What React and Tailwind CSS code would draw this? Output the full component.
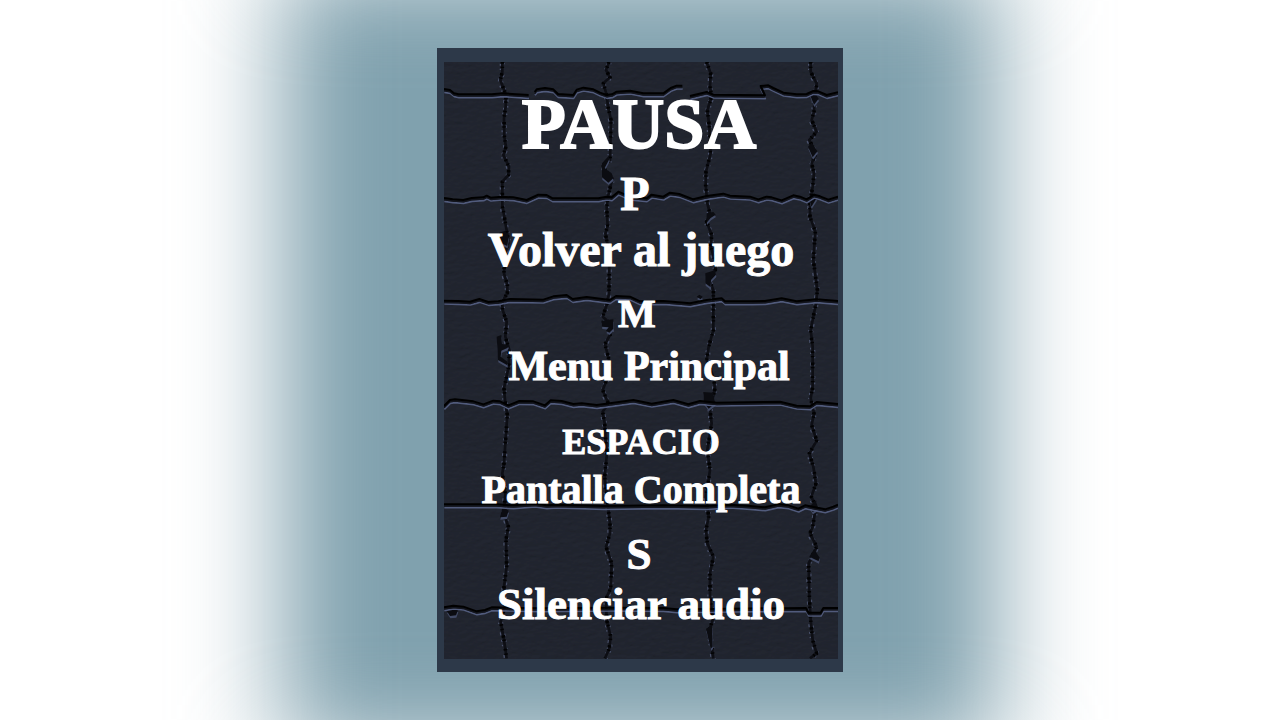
const rowCracks = [
  "M42 147L60 150 72 160 86 163 185 163 220 160 296 165 M314 156L320 148 345 144 370 148 384 162 430 165 440 149 460 143 490 148 510 158 530 165 546 163 560 155 600 152 640 160 700 160 722 144 740 137 757 137 M780 168L830 156 850 164 1005 166 997 148 992 138 1015 136 1030 144 1060 158 1100 163 1130 162 1150 153 1165 154 1190 165 1224 157",
  "M42 474L68 478 100 480 125 474 160 472 170 467 182 473 215 470 250 472 290 480 325 464 350 465 368 475 505 475 530 470 545 472 565 455 600 470 650 475 665 464 700 470 720 458 748 462 790 478 830 468 880 461 900 467 960 470 985 478 1010 470 1025 472 1055 481 1090 466 1110 470 1130 478 1152 464 1170 469 1195 479 1224 470",
  "M42 782L85 783 120 785 148 777 175 786 205 784 240 777 340 779 370 769 410 765 428 777 470 771 540 780 558 768 600 770 630 784 700 783 780 790 830 780 875 775 885 784 965 784 1005 783 1055 775 1100 784 1160 778 1224 783",
  "M42 1098L60 1080 75 1078 130 1084 160 1093 190 1082 210 1084 235 1096 268 1083 310 1084 345 1096 362 1081 395 1083 430 1092 455 1090 500 1095 540 1090 610 1080 665 1091 730 1080 775 1093 810 1083 860 1088 1050 1085 1100 1097 1140 1099 1160 1086 1224 1092",
  "M42 1393L200 1393 250 1396 315 1391 350 1396 380 1394 520 1398 700 1396 830 1398 900 1394 960 1398 1005 1402 1045 1393 1075 1396 1105 1406 1125 1396 1185 1408 1210 1400 1224 1394",
  "M42 1702L70 1697 100 1700 140 1714 165 1710 185 1702 330 1705 560 1703 700 1704 740 1708 900 1706 1128 1704 1136 1718 1172 1718 1180 1704 1224 1704",
];

const columnCracks = [
  "M217 66L217 96 211 120 228 165 227 200 222 235 223 290 228 320 220 345 237 380 235 405 217 425 217 495 228 560 235 600 224 650 222 700 232 735 232 760 216 785 218 810 230 845 226 890 238 930 236 980 222 1045 225 1080 232 1125 228 1180 222 1270 217 1300 226 1360 222 1420 235 1460 228 1500 230 1580 222 1640 224 1700 212 1745 222 1800 230 1855",
  "M537 66L528 90 540 112 520 130 530 165 534 200 543 240 540 360 520 378 530 400 547 415 535 465 530 500 533 560 526 580 538 640 537 760 530 795 518 830 547 855 540 885 525 912 537 960 530 1020 518 1050 535 1090 518 1115 524 1150 527 1200 531 1240 524 1310 533 1390 540 1450 540 1480 528 1520 545 1570 542 1645 528 1675 530 1740 542 1790 538 1825 525 1855",
  "M830 66L842 100 840 140 845 170 832 210 838 260 842 340 828 395 827 435 832 490 840 520 830 545 845 585 842 620 856 665 856 690 838 720 850 750 850 870 836 920 830 960 850 1010 855 1045 840 1110 845 1150 832 1230 840 1290 828 1370 836 1430 828 1470 832 1510 850 1550 840 1600 840 1670 848 1740 838 1770 850 1855",
  "M1142 66L1142 95 1160 130 1153 180 1152 215 1145 240 1160 275 1138 300 1158 340 1145 370 1152 400 1148 440 1140 490 1140 530 1156 575 1150 660 1162 750 1158 790 1142 870 1148 920 1148 1040 1142 1075 1152 1120 1145 1155 1160 1202 1138 1240 1150 1280 1158 1330 1144 1370 1158 1400 1148 1460 1140 1480 1160 1520 1136 1570 1138 1670 1142 1740 1148 1800 1160 1840 1140 1855",
];

const chips = [
  "M516 370L536 348 538 358 524 384 545 400 550 415 535 428 516 412Z",
  "M208 578L225 572 236 590 232 618 214 610 202 596Z",
  "M830 520L850 516 857 524 842 534 830 548Z",
  "M826 700L856 690 858 704 843 720 842 742 826 730Z",
  "M200 890L214 885 216 912 236 916 232 924 214 932 212 950 232 965 232 976 204 960Z",
  "M514 842L550 838 550 866 538 878 528 872 536 862 516 860Z",
  "M820 1056L850 1058 856 1090 836 1106 822 1088Z",
  "M210 1432L218 1400 236 1412 230 1430Z",
  "M1138 1550L1152 1528 1168 1552 1166 1564Z",
  "M828 1766L846 1756 848 1820 842 1826Z",
  "M1134 320L1145 308 1162 334 1148 352Z",
  "M1140 165L1152 154 1166 176 1152 194Z",
  "M1138 480L1152 460 1160 475 1144 500Z",
  "M50 1712L66 1702 84 1710 78 1726 60 1728Z",
  "M800 770L808 764 818 770 812 778Z",
  "M1138 1400L1158 1380 1164 1406 1148 1416Z",
];

function StoneWall() {
  return (
    <svg
      className="absolute inset-0 size-full"
      viewBox="42 66 1182 1791"
      preserveAspectRatio="none"
      fill="none"
      strokeLinejoin="round"
      aria-hidden="true"
    >
      <filter id="grain" x="0" y="0" width="100%" height="100%">
        <feTurbulence type="fractalNoise" baseFrequency="0.04 0.08" numOctaves="3" />
        <feDiffuseLighting lightingColor="#252935" surfaceScale="3">
          <feDistantLight azimuth="250" elevation="62" />
        </feDiffuseLighting>
      </filter>
      <rect x="42" y="66" width="1182" height="1791" filter="url(#grain)" opacity="0.5" />
      {columnCracks.map((d) => (
        <g key={d}>
          <path d={d} transform="translate(-6 5)" stroke="#4a526c" strokeWidth="4" strokeDasharray="6 9 4 26 9 14" />
          <path d={d} transform="translate(6 3)" stroke="#454d66" strokeWidth="4" strokeDasharray="4 31 8 12 5 18" />
          <path d={d} stroke="#0d0e14" strokeWidth="8" />
          <path d={d} stroke="#020203" strokeWidth="11" strokeDasharray="5 9 4 16 7 6 4 24" />
        </g>
      ))}
      {chips.map((d) => (
        <g key={d}>
          <path d={d} transform="translate(1 7)" fill="#424b66" />
          <path d={d} fill="#0b0c11" />
        </g>
      ))}
      {rowCracks.map((d) => (
        <g key={d}>
          <path d={d} transform="translate(1 10)" stroke="#515b7c" strokeWidth="5" />
          <path d={d} transform="translate(0 5)" stroke="#12141c" strokeWidth="5" />
          <path d={d} stroke="#000000" strokeWidth="6" />
        </g>
      ))}
    </svg>
  );
}

export default function App() {
  return (
    <main className="relative flex min-h-screen items-center justify-center overflow-hidden bg-white">
      <div className="absolute -inset-y-8 left-[22%] right-[22%] bg-[#80a1ae] blur-[50px]" />
      <section
        aria-labelledby="pause-title"
        className="relative w-full max-w-[406px] bg-[#2d3949] pt-[14px] pr-[5px] pb-[13px] pl-[7px]"
      >
        <div className="relative bg-[#1f222d] pt-6 pb-[31px] text-center font-['Liberation_Serif',serif] font-bold text-white [-webkit-text-stroke:1px_white]">
          <StoneWall />
          <div className="relative">
            <h1 id="pause-title" className="mr-1 text-[72px] leading-[76px] [-webkit-text-stroke:2px_white]">PAUSA</h1>
            <dl className="whitespace-nowrap leading-[48px]">
              <div className="mr-3 pt-2 text-[48px] leading-[48px]">
                <dt>P</dt>
              </div>
              <dd className="pt-2 text-[48px] leading-[48px]">Volver al juego</dd>
              <div className="pt-4 text-[42px] leading-[48px]">
                <dt className="mr-2 text-[40px] leading-[48px]">M</dt>
                <dd className="pt-1 pl-4">Menu Principal</dd>
              </div>
              <div className="pt-7 text-[40px] leading-[48px]">
                <dt className="text-[36px] leading-[48px]">ESPACIO</dt>
                <dd>Pantalla Completa</dd>
              </div>
              <div className="pt-4 text-[45px] leading-[48px]">
                <dt className="mr-1">S</dt>
                <dd className="pt-0.5">Silenciar audio</dd>
              </div>
            </dl>
          </div>
        </div>
      </section>
    </main>
  );
}
